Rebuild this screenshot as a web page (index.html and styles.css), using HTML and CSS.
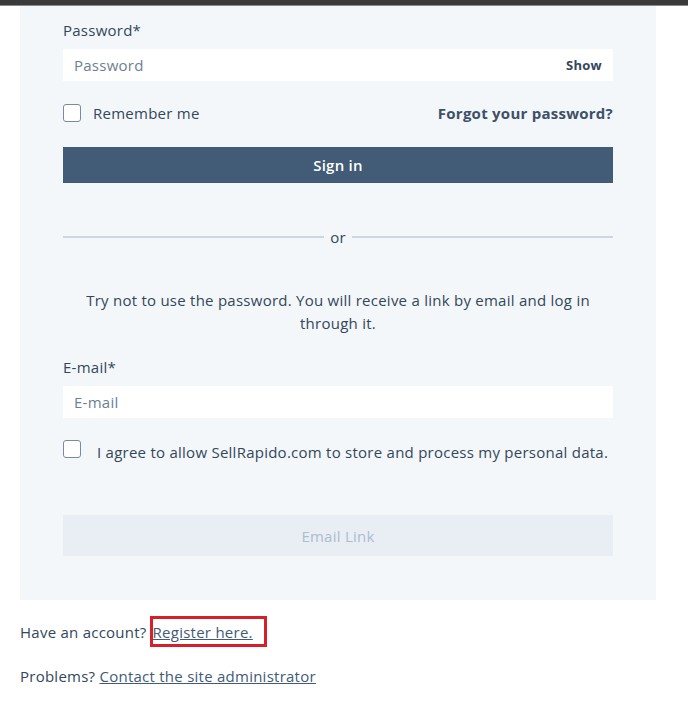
FILE: index.html
```html
<!DOCTYPE html>
<html lang="en">

<head>
    <meta charset="UTF-8">
    <title>Sign in</title>
    <link rel="stylesheet" href="styles.css">
</head>

<body>

    <div class="topbar"></div>

    <div class="login-card">
        <label class="field-label" for="password">Password*</label>
        <div class="input-box">
            <input type="password" id="password" placeholder="Password">
            <span class="show">Show</span>
        </div>

        <div class="remember-row">
            <label class="check">
                <span class="box"></span>
                <span>Remember me</span>
            </label>
            <a href="" class="forgot">Forgot your password?</a>
        </div>

        <button class="btn-primary">Sign in</button>

        <div class="divider"><span>or</span></div>

        <p class="hint">Try not to use the password. You will receive a link by email and log in through it.</p>

        <label class="field-label" for="email">E-mail*</label>
        <div class="input-box">
            <input type="text" id="email" placeholder="E-mail">
        </div>

        <label class="check consent">
            <span class="box"></span>
            <span>I agree to allow SellRapido.com to store and process my personal data.</span>
        </label>

        <button class="btn-disabled">Email Link</button>
    </div>

    <div class="footer">
        <p class="account">Have an account?<a href="" class="register">Register here.</a></p>
        <p class="problems">Problems? <a href="">Contact the site administrator</a></p>
    </div>

</body>

</html>
```

FILE: styles.css
```css
body {
    margin: 0;
    font-family: "Open Sans", "Noto Sans", sans-serif;
    font-size: 15px;
    line-height: 20px;
    letter-spacing: 0.25px;
    color: #33475b;
    background-color: #ffffff;
}

.topbar {
    height: 5px;
    background-color: #3a3a3a;
    border-bottom: 1px solid #8a8a8a;
}

.login-card {
    width: 550px;
    margin-left: 20px;
    padding: 14px 43px 44px 43px;
    background-color: #f4f7fa;
    display: flex;
    flex-direction: column;
}

.field-label {
    display: block;
    margin-bottom: 9px;
}

.input-box {
    display: flex;
    align-items: center;
    height: 32px;
    background-color: #ffffff;
    padding: 0 11px 0 11px;
}

.input-box input {
    flex: 1;
    border: none;
    outline: none;
    font-family: inherit;
    font-size: 15px;
    letter-spacing: inherit;
    color: #33475b;
    background: transparent;
    padding: 0;
}

.input-box input::placeholder {
    color: #6c7f93;
}

.show {
    font-size: 13px;
    font-weight: 700;
    color: #33475b;
}

.remember-row {
    display: flex;
    justify-content: space-between;
    align-items: center;
    margin-top: 22px;
}

.check {
    display: flex;
    align-items: center;
    gap: 12px;
}

.box {
    width: 16px;
    height: 16px;
    border: 1px solid #7c8b99;
    border-radius: 3px;
    background-color: #ffffff;
    flex-shrink: 0;
}

.forgot {
    font-weight: 700;
    color: #3d5068;
    text-decoration: none;
}

.btn-primary {
    margin-top: 24px;
    height: 36px;
    border: none;
    background-color: #425b76;
    color: #ffffff;
    font-family: inherit;
    font-size: 15px;
    font-weight: 600;
    letter-spacing: inherit;
}

.divider {
    display: flex;
    align-items: center;
    gap: 6px;
    margin-top: 44px;
}

.divider::before,
.divider::after {
    content: '';
    flex: 1;
    height: 2px;
    background-color: #cdd7e1;
}

.hint {
    margin: 42px 0 0 0;
    text-align: center;
    line-height: 23px;
}

.hint + .field-label {
    margin-top: 22px;
}

.consent {
    margin-top: 22px;
    gap: 16px;
}

/* la case est un peu plus haute que le texte */
.consent .box {
    margin-bottom: 6px;
}

.btn-disabled {
    margin-top: 51px;
    height: 41px;
    border: none;
    background-color: #e9eef4;
    color: #adbdd0;
    font-family: inherit;
    font-size: 15px;
    letter-spacing: inherit;
}

.footer {
    padding-left: 20px;
}

.footer p {
    margin: 0;
}

.footer a {
    color: #425b76;
}

.account {
    margin-top: 16px !important;
}

.register {
    display: inline-block;
    margin-left: 3px;
    padding: 3px 11px 2px 0;
    border: 3px solid #d61f29;
}

.problems {
    margin-top: 19px !important;
}
```
